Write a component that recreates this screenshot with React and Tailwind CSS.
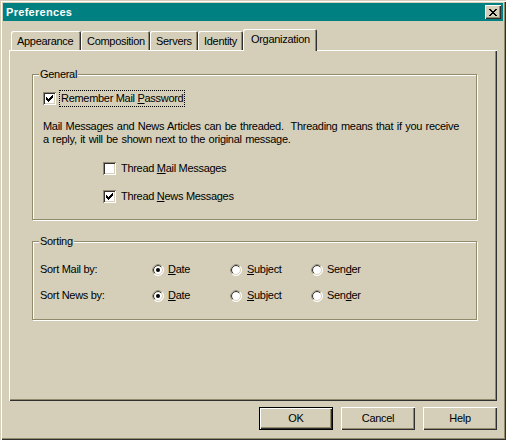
import React from "react";

const FACE = "bg-[#d5cfb9]";
const BEVEL =
  "shadow-[inset_1px_1px_0_#fff,inset_-1px_-1px_0_#303030,inset_-2px_-2px_0_#928a6c]";

function CheckBox({ checked }) {
  return (
    <span className="relative inline-block w-[13px] h-[13px] shrink-0 bg-white shadow-[inset_1px_1px_0_#928a6c,inset_-1px_-1px_0_#fff,inset_2px_2px_0_#303030,inset_-2px_-2px_0_#d5cfb9]">
      {checked && (
        <svg
          className="absolute left-0 top-0"
          width="13"
          height="13"
          viewBox="0 0 13 13"
          shapeRendering="crispEdges"
        >
          <g fill="#000">
            <rect x="9" y="3" width="1" height="1" />
            <rect x="8" y="4" width="2" height="1" />
            <rect x="3" y="5" width="1" height="1" />
            <rect x="7" y="5" width="3" height="1" />
            <rect x="3" y="6" width="2" height="1" />
            <rect x="6" y="6" width="3" height="1" />
            <rect x="3" y="7" width="5" height="1" />
            <rect x="4" y="8" width="3" height="1" />
            <rect x="5" y="9" width="1" height="1" />
          </g>
        </svg>
      )}
    </span>
  );
}

function Radio({ checked }) {
  const arc = (r) => {
    const d = r * 0.7071;
    return `M${6 - d} ${6 + d} A${r} ${r} 0 0 1 ${6 + d} ${6 - d}`;
  };
  return (
    <svg width="12" height="12" viewBox="0 0 12 12" className="shrink-0">
      <circle cx="6" cy="6" r="5.5" fill="#fff" stroke="#fff" strokeWidth="1" />
      <path d={arc(5.5)} fill="none" stroke="#928a6c" strokeWidth="1" />
      <circle cx="6" cy="6" r="4.5" fill="#fff" stroke="#d5cfb9" strokeWidth="1" />
      <path d={arc(4.5)} fill="none" stroke="#303030" strokeWidth="1" />
      {checked && <circle cx="6" cy="6" r="2" fill="#000" />}
    </svg>
  );
}

function GroupBox({ label, className, children }) {
  return (
    <div
      className={`relative w-[445px] border border-[#928a6c] shadow-[inset_1px_1px_0_#fff,1px_1px_0_#fff] ${className}`}
    >
      <span className={`absolute left-[6px] top-[-7px] px-[1px] leading-[13px] ${FACE}`}>
        {label}
      </span>
      {children}
    </div>
  );
}

function SortRow({ label, className }) {
  return (
    <div className={`flex items-center h-[13px] pl-[7px] ${className}`}>
      <span className="w-[112px]">{label}</span>
      <span className="flex items-center w-[78px]">
        <Radio checked />
        <span className="ml-[4px]">
          <u>D</u>ate
        </span>
      </span>
      <span className="flex items-center w-[81px]">
        <Radio />
        <span className="ml-[5px]">
          <u>S</u>ubject
        </span>
      </span>
      <span className="flex items-center">
        <Radio />
        <span className="ml-[4px]">
          Sen<u>d</u>er
        </span>
      </span>
    </div>
  );
}

export default function App() {
  const tabs = [
    { label: "Appearance", w: "w-[70px]" },
    { label: "Composition", w: "w-[69px]" },
    { label: "Servers", w: "w-[48px]" },
    { label: "Identity", w: "w-[45px]" },
  ];

  return (
    <div
      className={`w-[506px] h-[440px] p-[3px] ${FACE} text-black text-[11px] tracking-[-0.3px] font-['Liberation_Sans',Arial,sans-serif] shadow-[inset_1px_1px_0_#d5cfb9,inset_2px_2px_0_#fff,inset_-1px_-1px_0_#303030,inset_-2px_-2px_0_#928a6c]`}
    >
      {/* title bar */}
      <div className="flex items-center justify-between h-[18px] bg-[#008080] pl-[3px]">
        <span className="text-white font-bold tracking-[0.3px]">Preferences</span>
        <button className={`flex items-center justify-center w-[16px] h-[14px] mr-[2px] ${FACE} ${BEVEL}`}>
          <svg width="8" height="7" viewBox="0 0 8 7" shapeRendering="crispEdges">
            <path
              fill="#000"
              d="M0 0h2v1h-2zM6 0h2v1h-2zM1 1h2v1h-2zM5 1h2v1h-2zM2 2h4v1h-4zM3 3h2v1h-2zM2 4h4v1h-4zM1 5h2v1h-2zM5 5h2v1h-2zM0 6h2v1h-2zM6 6h2v1h-2z"
            />
          </svg>
        </button>
      </div>

      {/* tabs */}
      <div className="flex items-end h-[21px] mt-[8px] ml-[8px]">
        {tabs.map((t) => (
          <div
            key={t.label}
            className={`${t.w} h-[19px] pl-[6px] leading-[20px] rounded-t-[2px] shadow-[inset_1px_1px_0_#fff,inset_-1px_0_0_#303030,inset_-2px_0_0_#928a6c]`}
          >
            {t.label}
          </div>
        ))}
        <div
          className={`relative z-10 w-[74px] h-[22px] mb-[-1px] pl-[8px] leading-[20px] rounded-t-[2px] ${FACE} shadow-[inset_1px_1px_0_#fff,inset_-1px_0_0_#303030,inset_-2px_0_0_#928a6c]`}
        >
          Organization
        </div>
      </div>

      {/* tab panel */}
      <div className="w-[488px] h-[351px] ml-[6px] pl-[23px] pt-[24px] shadow-[inset_1px_1px_0_#fff,inset_-1px_-1px_0_#303030,inset_-2px_-2px_0_#928a6c]">
        <GroupBox label="General" className="h-[146px]">
          <div className="flex items-center h-[15px] mt-[16px] pl-[10px]">
            <CheckBox checked />
            <span className="inline-block ml-[4px] px-[1px] h-[15px] leading-[15px] outline outline-1 outline-dotted outline-black">
              Remember Mail <u>P</u>assword
            </span>
          </div>
          <p className="mt-[14px] pl-[10px] leading-[13px] whitespace-pre [word-spacing:0.8px]">
            {"Mail Messages and News Articles can be threaded.  Threading means that if you receive\na reply, it will be shown next to the original message."}
          </p>
          <div className="flex items-center h-[15px] mt-[15px] pl-[70px]">
            <CheckBox />
            <span className="ml-[5px]">
              Thread <u>M</u>ail Messages
            </span>
          </div>
          <div className="flex items-center h-[15px] mt-[13px] pl-[70px]">
            <CheckBox checked />
            <span className="ml-[5px]">
              Thread <u>N</u>ews Messages
            </span>
          </div>
        </GroupBox>

        <GroupBox label="Sorting" className="h-[79px] mt-[21px]">
          <SortRow label="Sort Mail by:" className="mt-[21px]" />
          <SortRow label="Sort News by:" className="mt-[13px]" />
        </GroupBox>
      </div>

      {/* buttons */}
      <div className="flex justify-end gap-[8px] mt-[6px] pr-[6px]">
        <button className={`w-[74px] h-[23px] border border-black ${FACE} ${BEVEL}`}>OK</button>
        <button className={`w-[74px] h-[23px] ${FACE} ${BEVEL}`}>Cancel</button>
        <button className={`w-[74px] h-[23px] ${FACE} ${BEVEL}`}>Help</button>
      </div>
    </div>
  );
}
